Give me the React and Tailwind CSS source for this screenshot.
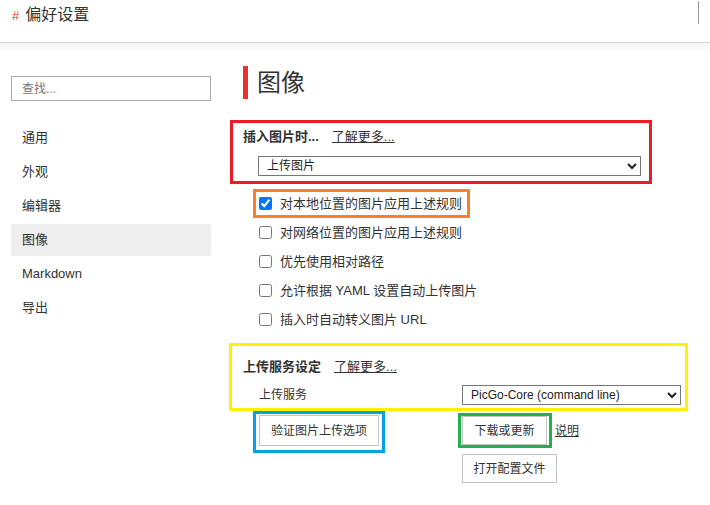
const font = {
  fontFamily: '"Liberation Sans", "Noto Sans CJK SC", sans-serif',
};

const navItems = ["通用", "外观", "编辑器", "图像", "Markdown", "导出"];

const checks = [
  { label: "对本地位置的图片应用上述规则", checked: true, boxed: true },
  { label: "对网络位置的图片应用上述规则" },
  { label: "优先使用相对路径" },
  { label: "允许根据 YAML 设置自动上传图片" },
  { label: "插入时自动转义图片 URL" },
];

function CheckRow({ label, checked, boxed }) {
  return (
    <div
      className={`flex items-center h-[29px] w-fit border-[3px] pl-[3px] pr-[5px] ${
        boxed ? "border-[#ff7f27]" : "border-transparent"
      }`}
    >
      <input
        type="checkbox"
        defaultChecked={checked}
        className="w-[13px] h-[13px] m-0 accent-[#0075ff]"
      />
      <span className="ml-[8px] text-[13px] leading-[18px] text-[#333]">{label}</span>
    </div>
  );
}

export default function App() {
  return (
    <div className="w-[710px] h-[505px] bg-white overflow-hidden text-[#333]" style={font}>
      <div className="h-[43px] flex justify-between border-b border-[#d6d6d6]">
        <div className="pl-[12px] pt-[5px] text-[16px] leading-[20px]">
          <span className="text-[#e53935] text-[13px] mr-[6px]">#</span>
          <span className="text-[#333]">偏好设置</span>
        </div>
        <div className="w-px h-[23px] mt-px mr-[11px] bg-[#999]" />
      </div>
      <div className="flex bg-gradient-to-b from-[#f4f4f4] via-white via-[10px] to-white h-[462px]">
        <div className="w-[229px] shrink-0 pl-[11px]">
          <div className="mt-[33px] w-[200px] h-[25px] border border-[#a9a9a9] flex items-center pl-[10px] text-[12px] text-[#757575] bg-white">
            查找...
          </div>
          <div className="mt-[21px] w-[200px] flex flex-col gap-[2px]">
            {navItems.map((item) => (
              <div
                key={item}
                className={`h-[32px] flex items-center pl-[11px] text-[13px] rounded-[2px] ${
                  item === "图像" ? "bg-[#eeeeee]" : ""
                }`}
              >
                {item}
              </div>
            ))}
          </div>
        </div>

        <div className="flex flex-col w-[459px]">
          <div className="mt-[23px] ml-[14px] flex items-center h-[33px]">
            <div className="w-[5px] h-[33px] bg-[#e8322e]" />
            <div className="ml-[9px] text-[24px] leading-[30px] text-[#333]">图像</div>
          </div>

          <div className="mt-[21px] ml-px w-[422px] h-[64px] border-[3px] border-[#ed1c24] pl-[10px] pt-[5px]">
            <div className="flex items-center h-[18px] text-[13px]">
              <span className="font-bold">插入图片时...</span>
              <span className="ml-[13px] underline">了解更多...</span>
            </div>
            <select className="mt-[10px] ml-[15px] w-[383px] h-[20px] border border-[#767676] bg-white text-[12px] pl-[4px] text-[#222]">
              <option>上传图片</option>
            </select>
          </div>

          <div className="mt-[5px] ml-[24px] flex flex-col">
            {checks.map((c) => (
              <CheckRow key={c.label} {...c} />
            ))}
          </div>

          <div className="mt-[9px] w-[459px] h-[68px] border-[3px] border-[#fff200] pl-[11px] pt-[12px]">
            <div className="flex items-center h-[18px] text-[13px]">
              <span className="font-bold">上传服务设定</span>
              <span className="ml-[13px] underline">了解更多...</span>
            </div>
            <div className="mt-[9px] flex items-center h-[20px]">
              <span className="ml-[16px] w-[203px] text-[12px]">上传服务</span>
              <select className="w-[219px] h-[20px] border border-[#767676] bg-white text-[12px] pl-[4px] text-[#222]">
                <option>PicGo-Core (command line)</option>
              </select>
            </div>
          </div>

          <div className="ml-[24px] flex items-start">
            <div className="w-[132px] h-[42px] border-[3px] border-[#00a2e8] pt-px pl-[3px]">
              <button className="w-[120px] h-[31px] border border-[#c4c4c4] bg-white text-[12px] text-[#333]">
                验证图片上传选项
              </button>
            </div>
            <div className="ml-[73px] flex flex-col">
              <div className="mt-[2px] flex items-center">
                <div className="border-[3px] border-[#22b14c] pl-px pr-[2px]">
                  <button className="w-[85px] h-[29px] border border-[#c4c4c4] bg-white text-[12px] text-[#333]">
                    下载或更新
                  </button>
                </div>
                <span className="ml-[3px] text-[12px] underline">说明</span>
              </div>
              <button className="mt-[6px] ml-[4px] w-[95px] h-[29px] border border-[#c4c4c4] bg-white text-[12px] text-[#333]">
                打开配置文件
              </button>
            </div>
          </div>
        </div>
      </div>
    </div>
  );
}
